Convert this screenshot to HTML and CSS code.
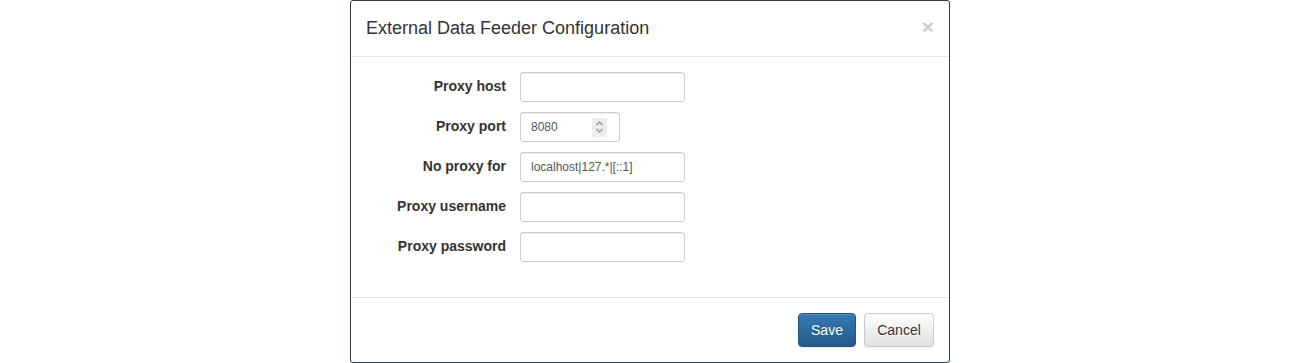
FILE: index.html
```html
<!DOCTYPE html>
<html>
<head>
<meta charset="utf-8">
<link rel="stylesheet" href="styles.css">
</head>
<body>
<div class="modal">
  <div class="modal-header">
    <h4 class="modal-title">External Data Feeder Configuration</h4>
    <button class="close" type="button">&times;</button>
  </div>
  <div class="modal-body">
    <form class="form">
      <label class="lbl">Proxy host</label>
      <div class="field"><input class="input wide" type="text"></div>
      <label class="lbl">Proxy port</label>
      <div class="field">
        <div class="input port"><span class="val">8080</span><span class="spin"><svg width="9" height="14" viewBox="0 0 9 14"><path d="M1.5 5 L4.5 2 L7.5 5" fill="none" stroke="#8a8a8a" stroke-width="1.1"/><path d="M1.5 9 L4.5 12 L7.5 9" fill="none" stroke="#8a8a8a" stroke-width="1.1"/></svg></span></div>
      </div>
      <label class="lbl">No proxy for</label>
      <div class="field"><input class="input wide" type="text" value="localhost|127.*|[::1]"></div>
      <label class="lbl">Proxy username</label>
      <div class="field"><input class="input wide" type="text"></div>
      <label class="lbl">Proxy password</label>
      <div class="field"><input class="input wide" type="password"></div>
    </form>
  </div>
  <div class="modal-footer">
    <button class="btn btn-primary" type="button">Save</button>
    <button class="btn btn-default" type="button">Cancel</button>
  </div>
</div>
</body>
</html>
```
FILE: styles.css
```css
* { box-sizing: border-box; }
html, body { margin: 0; padding: 0; background: #fff; }
body {
  font-family: "Liberation Sans", Arial, sans-serif;
  font-size: 14px;
  color: #333;
  line-height: 1.42857;
}
.modal {
  width: 600px;
  height: 363px;
  margin: 0 auto;
  border: 1px solid #2e3d48;
  border-radius: 3px;
  background: #fff;
  display: flex;
  flex-direction: column;
}
.modal-header {
  padding: 15px;
  border-bottom: 1px solid #e5e5e5;
  display: flex;
  justify-content: space-between;
  align-items: flex-start;
  height: 56px;
}
.modal-title {
  margin: 0;
  font-size: 18px;
  font-weight: normal;
  line-height: 25px;
  color: #333;
}
.close {
  border: 0;
  background: transparent;
  padding: 0;
  margin-top: 0;
  font-family: "Liberation Sans", Arial, sans-serif;
  font-size: 21px;
  font-weight: bold;
  line-height: 1;
  color: #000;
  opacity: .2;
  cursor: pointer;
}
.modal-body {
  padding: 15px 15px 25px 15px;
  height: 240px;
}
.form {
  display: grid;
  grid-template-columns: 140px 1fr;
  column-gap: 14px;
  row-gap: 10px;
  align-items: center;
}
.lbl {
  text-align: right;
  font-weight: bold;
  font-size: 14px;
  color: #333;
}
.field { display: flex; }
.input {
  height: 30px;
  padding: 5px 10px;
  font-family: "Liberation Sans", Arial, sans-serif;
  font-size: 12px;
  color: #555;
  border: 1px solid #ccc;
  border-radius: 3px;
  background: #fff;
  box-shadow: inset 0 1px 1px rgba(0,0,0,.075);
  outline: none;
}
.wide { width: 165px; }
.port {
  width: 100px;
  display: flex;
  align-items: center;
  justify-content: space-between;
  padding-right: 12px;
}
.val { line-height: 18px; }
.spin {
  width: 15px;
  height: 19px;
  background: #ececec;
  display: flex;
  align-items: center;
  justify-content: center;
}
.modal-footer {
  border-top: 1px solid #e5e5e5;
  padding: 15px;
  display: flex;
  justify-content: flex-end;
  gap: 8px;
}
.btn {
  height: 34px;
  padding: 6px 12px;
  font-family: "Liberation Sans", Arial, sans-serif;
  font-size: 14px;
  line-height: 20px;
  border-radius: 4px;
  border: 1px solid transparent;
  cursor: pointer;
}
.btn-primary {
  color: #fff;
  background-image: linear-gradient(to bottom, #337ab7 0, #265a88 100%);
  border-color: #245580;
  text-shadow: 0 -1px 0 rgba(0,0,0,.2);
  box-shadow: inset 0 1px 0 rgba(255,255,255,.15), 0 1px 1px rgba(0,0,0,.075);
  width: 58px;
}
.btn-default {
  color: #333;
  background-image: linear-gradient(to bottom, #fff 0, #e0e0e0 100%);
  border-color: #ccc;
  text-shadow: 0 1px 0 #fff;
  box-shadow: inset 0 1px 0 rgba(255,255,255,.15), 0 1px 1px rgba(0,0,0,.075);
  width: 70px;
}
```
